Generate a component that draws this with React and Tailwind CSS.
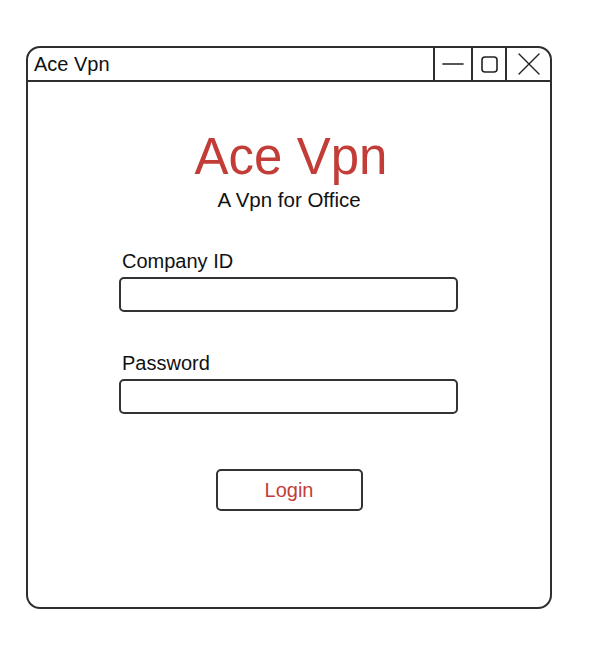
export default function App() {
  return (
    <div className="w-[589px] h-[646px] bg-white pt-[46px] pl-[26px] font-['Liberation_Sans',Arial,sans-serif] text-[#111]">
      <div className="w-[526px] h-[563px] border-2 border-[#2e2e2e] rounded-[14px] flex flex-col">
        <div className="h-[34px] border-b-2 border-[#2e2e2e] flex items-stretch">
          <div className="pl-[6px] flex items-center text-[20px] leading-none">Ace Vpn</div>
          <div className="ml-auto flex items-stretch">
            <div className="w-[38px] border-l-2 border-[#2e2e2e] flex items-center justify-center">
              <svg width="22" height="4" viewBox="0 0 22 4">
                <path d="M1 2 H21" stroke="#222" strokeWidth="1.6" strokeLinecap="round" />
              </svg>
            </div>
            <div className="w-[34px] border-l-2 border-[#2e2e2e] flex items-center justify-center">
              <svg width="19" height="19" viewBox="0 0 19 19">
                <rect x="2" y="2" width="15" height="15" rx="3" fill="none" stroke="#222" strokeWidth="1.6" />
              </svg>
            </div>
            <div className="w-[45px] border-l-2 border-[#2e2e2e] flex items-center justify-center">
              <svg width="24" height="22" viewBox="0 0 24 22">
                <path d="M2 1 L22 21 M22 1 L2 21" stroke="#222" strokeWidth="1.4" strokeLinecap="round" fill="none" />
              </svg>
            </div>
          </div>
        </div>

        <div className="flex flex-col items-center">
          <h1 className="mt-[49px] pl-[4px] text-[51px] leading-none text-[#c23d37]">Ace Vpn</h1>
          <p className="mt-[8px] text-[20.5px] leading-none">A Vpn for Office</p>

          <div className="w-[340px] flex flex-col mt-[40px]">
            <label className="pl-[3px] text-[20px] leading-none">Company ID</label>
            <input className="mt-[6px] h-[35px] w-[339px] border-2 border-[#333] rounded-[5px] outline-none" />
            <label className="mt-[41px] pl-[3px] text-[20px] leading-none">Password</label>
            <input type="password" className="mt-[6px] h-[35px] w-[339px] border-2 border-[#333] rounded-[5px] outline-none" />
          </div>

          <button className="mt-[55px] w-[147px] h-[42px] border-2 border-[#333] rounded-[5px] text-[20px] leading-none text-[#c23d37]">
            Login
          </button>
        </div>
      </div>
    </div>
  );
}
